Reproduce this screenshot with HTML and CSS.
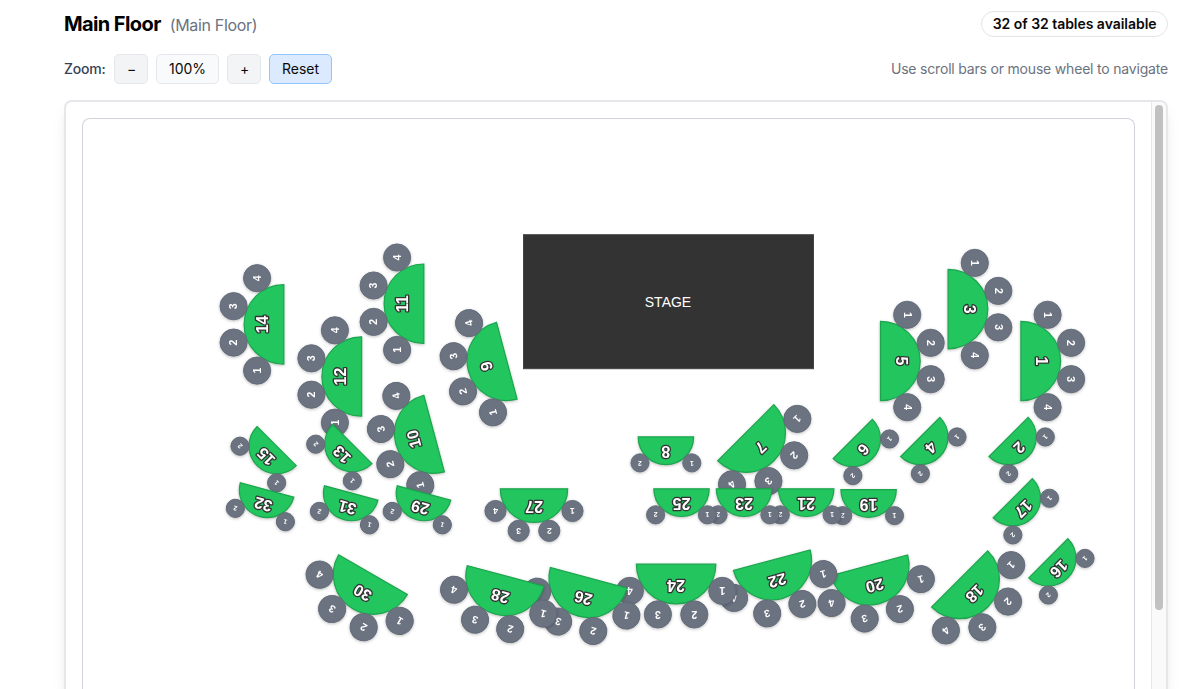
FILE: index.html
```html
<!DOCTYPE html>
<html lang="en">
<head>
<meta charset="utf-8">
<title>Main Floor</title>
<link rel="stylesheet" href="styles.css">
</head>
<body>
<main class="page">
  <header class="head">
    <div class="title"><h1>Main Floor</h1><span class="sub">(Main Floor)</span></div>
    <span class="badge">32 of 32 tables available</span>
  </header>
  <div class="toolbar">
    <div class="zoom">
      <span class="zoom-label">Zoom:</span>
      <button class="btn step">−</button>
      <span class="btn level">100%</span>
      <button class="btn step">+</button>
      <button class="btn reset">Reset</button>
    </div>
    <span class="hint">Use scroll bars or mouse wheel to navigate</span>
  </div>
  <section class="viewport">
    <div class="scroller">
      <div class="floor">
        <svg class="map" viewBox="83 119 1051 570" width="1051" height="570">
          <defs>
            <g id="t4">
              <path class="top" d="M-39.7 0A39.7 39.7 0 0 1 39.7 0Z"/>
              <g class="seat"><circle cx="-46.2" cy="-26.7" r="13.6"/><circle cx="-18.2" cy="-50.2" r="13.6"/><circle cx="18.2" cy="-50.2" r="13.6"/><circle cx="46.2" cy="-26.7" r="13.6"/></g>
              <g><text class="num" x="-46.2" y="-23.1">1</text><text class="num" x="-18.2" y="-46.6">2</text><text class="num" x="18.2" y="-46.6">3</text><text class="num" x="46.2" y="-23.1">4</text></g>
            </g>
            <g id="t4m">
              <path class="top" d="M-33.7 0A33.7 33.7 0 0 1 33.7 0Z"/>
              <g class="seat"><circle cx="-38.5" cy="-22.2" r="10.6"/><circle cx="-15.3" cy="-42" r="10.6"/><circle cx="15.3" cy="-42" r="10.6"/><circle cx="38.5" cy="-22.2" r="10.6"/></g>
              <g><text class="num mid" x="-38.5" y="-19.3">1</text><text class="num mid" x="-15.3" y="-39.1">2</text><text class="num mid" x="15.3" y="-39.1">3</text><text class="num mid" x="38.5" y="-19.3">4</text></g>
            </g>
            <g id="t2">
              <path class="top" d="M-27.7 0A27.7 27.7 0 0 1 27.7 0Z"/>
              <g class="seat"><circle cx="-25.9" cy="-26" r="9.1"/><circle cx="25.9" cy="-26" r="9.1"/></g>
              <g><text class="num small" x="-25.9" y="-23.7">1</text><text class="num small" x="25.9" y="-23.7">2</text></g>
            </g>
          </defs>
          <rect class="stage" x="523.5" y="234.7" width="290" height="134"/>
          <text class="stage-name" x="668" y="307">STAGE</text>
          <g class="table" transform="translate(1020.9 361)"><g transform="rotate(90)"><use href="#t4"/><text class="label" y="-15.5">1</text></g></g>
          <g class="table" transform="translate(1008.6 436.9)"><g transform="rotate(135)"><use href="#t2"/><text class="label" y="-9.5">2</text></g></g>
          <g class="table" transform="translate(948.1 309.1)"><g transform="rotate(90)"><use href="#t4"/><text class="label" y="-15.5">3</text></g></g>
          <g class="table" transform="translate(920.3 436.9)"><g transform="rotate(135)"><use href="#t2"/><text class="label" y="-9.5">4</text></g></g>
          <g class="table" transform="translate(880.5 361)"><g transform="rotate(90)"><use href="#t4"/><text class="label" y="-15.5">5</text></g></g>
          <g class="table" transform="translate(852.8 438.9)"><g transform="rotate(135)"><use href="#t2"/><text class="label" y="-9.5">6</text></g></g>
          <g class="table" transform="translate(745.8 432.7)"><g transform="rotate(135)"><use href="#t4"/><text class="label" y="-15.5">7</text></g></g>
          <g class="table" transform="translate(665.9 436.9)"><g transform="rotate(180)"><use href="#t2"/><text class="label" y="-9.5">8</text></g></g>
          <g class="table" transform="translate(506.8 360.8)"><g transform="rotate(255)"><use href="#t4"/><text class="label" y="-15.5">9</text></g></g>
          <g class="table" transform="translate(434.1 433.6)"><g transform="rotate(255)"><use href="#t4"/><text class="label" y="-15.5">10</text></g></g>
          <g class="table" transform="translate(423.8 303.7)"><g transform="rotate(270)"><use href="#t4"/><text class="label" y="-15.5">11</text></g></g>
          <g class="table" transform="translate(361.6 376.5)"><g transform="rotate(270)"><use href="#t4"/><text class="label" y="-15.5">12</text></g></g>
          <g class="table" transform="translate(352.4 444.1)"><g transform="rotate(225)"><use href="#t2"/><text class="label" y="-9.5">13</text></g></g>
          <g class="table" transform="translate(283.8 324.4)"><g transform="rotate(270)"><use href="#t4"/><text class="label" y="-15.5">14</text></g></g>
          <g class="table" transform="translate(276.7 446.1)"><g transform="rotate(225)"><use href="#t2"/><text class="label" y="-9.5">15</text></g></g>
          <g class="table" transform="translate(1048.3 558.3)"><g transform="rotate(135)"><use href="#t2"/><text class="label" y="-9.5">16</text></g></g>
          <g class="table" transform="translate(1012.8 498.2)"><g transform="rotate(135)"><use href="#t2"/><text class="label" y="-9.5">17</text></g></g>
          <g class="table" transform="translate(959.7 578.9)"><g transform="rotate(135)"><use href="#t4"/><text class="label" y="-15.5">18</text></g></g>
          <g class="table" transform="translate(868.6 489.6)"><g transform="rotate(180)"><use href="#t2"/><text class="label" y="-9.5">19</text></g></g>
          <g class="table" transform="translate(869.3 565.3)"><g transform="rotate(165)"><use href="#t4"/><text class="label" y="-15.5">20</text></g></g>
          <g class="table" transform="translate(806.2 488.8)"><g transform="rotate(180)"><use href="#t2"/><text class="label" y="-9.5">21</text></g></g>
          <g class="table" transform="translate(771.8 560.2)"><g transform="rotate(165)"><use href="#t4"/><text class="label" y="-15.5">22</text></g></g>
          <g class="table" transform="translate(744 488.8)"><g transform="rotate(180)"><use href="#t2"/><text class="label" y="-9.5">23</text></g></g>
          <g class="table" transform="translate(676.1 564.2)"><g transform="rotate(180)"><use href="#t4"/><text class="label" y="-15.5">24</text></g></g>
          <g class="table" transform="translate(681.5 488.8)"><g transform="rotate(180)"><use href="#t2"/><text class="label" y="-9.5">25</text></g></g>
          <g class="table" transform="translate(588.7 577.8)"><g transform="rotate(195)"><use href="#t4"/><text class="label" y="-15.5">26</text></g></g>
          <g class="table" transform="translate(534 488.8)"><g transform="rotate(180)"><use href="#t4m"/><text class="label" y="-12.5">27</text></g></g>
          <g class="table" transform="translate(505.6 575.9)"><g transform="rotate(195)"><use href="#t4"/><text class="label" y="-15.5">28</text></g></g>
          <g class="table" transform="translate(424 493)"><g transform="rotate(195)"><use href="#t2"/><text class="label" y="-9.5">29</text></g></g>
          <g class="table" transform="translate(373 574.6)"><g transform="rotate(210)"><use href="#t4"/><text class="label" y="-15.5">30</text></g></g>
          <g class="table" transform="translate(351.2 493)"><g transform="rotate(195)"><use href="#t2"/><text class="label" y="-9.5">31</text></g></g>
          <g class="table" transform="translate(267.1 489.9)"><g transform="rotate(195)"><use href="#t2"/><text class="label" y="-9.5">32</text></g></g>
        </svg>
      </div>
    </div>
    <div class="track"><div class="thumb"></div></div>
  </section>
</main>
</body>
</html>
```
FILE: styles.css
```css
* { box-sizing: border-box; }
body { margin: 0; background: #fff; color: #0a0a0a; font-family: Inter, "Liberation Sans", sans-serif; }
.page { display: flex; flex-direction: column; width: 1182px; height: 689px; padding: 10px 14px 0 64px; overflow: hidden; }
.head, .toolbar, .zoom, .title { display: flex; align-items: center; }
.head, .toolbar { justify-content: space-between; flex: none; }
.head { height: 28px; }
.title { gap: 9px; }
h1 { margin: 0; font-size: 20px; line-height: 28px; font-weight: 700; letter-spacing: -.6px; color: #000; }
.sub { font-size: 16px; line-height: 24px; letter-spacing: -.33px; color: #6b7280; padding-top: 2px; }
.badge { height: 26px; padding: 0 10.5px; border: 1px solid #e5e5e5; border-radius: 13px; font-size: 14px; line-height: 24px; font-weight: 600; letter-spacing: -.04px; }
.toolbar { margin-top: 16px; height: 30px; font-size: 14px; }
.zoom { gap: 8px; }
.zoom-label { width: 42px; font-weight: 500; letter-spacing: -.2px; color: #374151; line-height: 28px; padding-bottom: 1px; }
.btn { display: block; height: 30px; padding: 0 12px; border: 1px solid #e5e7eb; border-radius: 5px; font: 400 14px/28px Inter, sans-serif; color: #0a0a0a; text-align: center; }
.step { width: 34px; background: #f3f4f6; }
.level { width: 63px; background: #f9fafb; }
.reset { width: 63px; padding: 0; background: #dbeafe; border-color: #93c5fd; }
.hint { color: #6b7280; letter-spacing: -.19px; line-height: 28px; padding-bottom: 1px; }
.viewport { display: flex; flex: 1; min-height: 0; margin-top: 16px; border: 2px solid #e5e7eb; border-bottom: 0; border-radius: 8px 8px 0 0; box-shadow: 0 10px 15px -3px rgba(0,0,0,.1), 0 4px 6px -4px rgba(0,0,0,.1); }
.scroller { flex: 1; padding: 16px 16px 0; }
.floor { width: 1053px; height: 571px; border: 1px solid #d1d5db; border-bottom: 0; border-radius: 8px 8px 0 0; }
.map { display: block; }
.track { width: 15px; border-left: 1px solid #e8e8e8; border-top-right-radius: 6px; background: #fafafa; padding: 3px 3px 0; }
.thumb { width: 8px; height: 505px; border-radius: 4px; background: #c1c1c1; }
.stage { fill: #333; stroke: #444; stroke-width: 1; }
.stage-name { font: 14px "Liberation Sans", sans-serif; fill: #fff; text-anchor: middle; }
.table { filter: drop-shadow(0 1.5px 1.5px rgba(0,0,0,.25)); }
.label { font: 700 16px "Liberation Sans", sans-serif; fill: #fff; stroke: #333; stroke-width: 2.6px; stroke-linejoin: round; paint-order: stroke; text-anchor: middle; }
.top { fill: #22c55e; stroke: #1ba54d; stroke-width: 1.2; }
.seat { fill: #6b7280; stroke: #626a78; stroke-width: .9; }
.num { font: 700 10.5px "Liberation Sans", sans-serif; fill: #fff; text-anchor: middle; }
.mid { font-size: 8.5px; }
.small { font-size: 6.7px; }
```
